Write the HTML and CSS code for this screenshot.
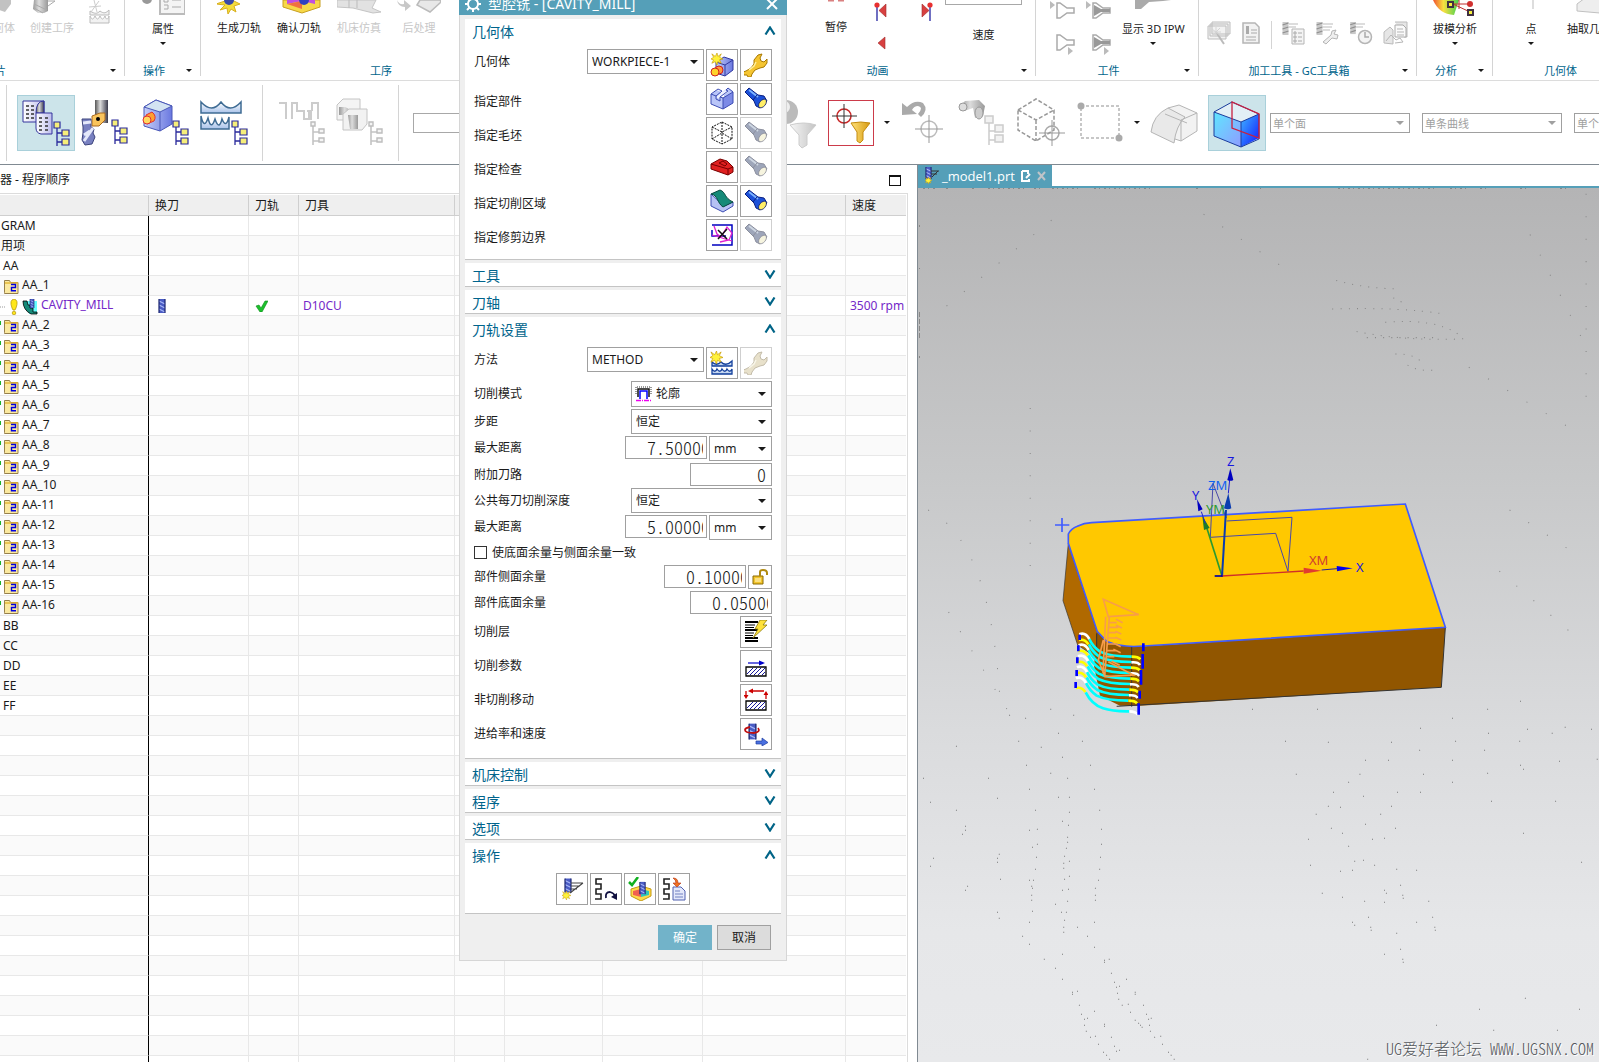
FILE: index.html
```html
<!DOCTYPE html>
<html lang="zh-CN">
<head>
<meta charset="utf-8">
<title>型腔铣 - [CAVITY_MILL]</title>
<link rel="stylesheet" href="styles.css">
</head>
<body>
<svg class="defs" width="0" height="0" aria-hidden="true">
  <defs>
    <linearGradient id="gBlue" x2="1"><stop offset="0" stop-color="#c3cdf8"/><stop offset="1" stop-color="#6a78e0"/></linearGradient>
    <linearGradient id="gPage" x2="1"><stop offset="0" stop-color="#fff"/><stop offset="1" stop-color="#bcbcec"/></linearGradient>
    <linearGradient id="gSteel" x2="1"><stop offset="0" stop-color="#555"/><stop offset=".4" stop-color="#ddd"/><stop offset="1" stop-color="#3a3a4a"/></linearGradient>
    <linearGradient id="gGray" x2="1"><stop offset="0" stop-color="#f6f6f6"/><stop offset="1" stop-color="#c4c4c4"/></linearGradient>
    <linearGradient id="gDark" x2="1"><stop offset="0" stop-color="#999"/><stop offset=".4" stop-color="#ddd"/><stop offset="1" stop-color="#999"/></linearGradient>
    <linearGradient id="gGold" x2="1"><stop offset="0" stop-color="#ffe27a"/><stop offset="1" stop-color="#d79a10"/></linearGradient>
    <linearGradient id="gWater" y2="1" x2="0"><stop offset="0" stop-color="#fff"/><stop offset="1" stop-color="#a9c3ea"/></linearGradient>
    <linearGradient id="gCubeL" y2="1" x2="1"><stop offset="0" stop-color="#5fe6ff"/><stop offset="1" stop-color="#8f9cff"/></linearGradient>
    <linearGradient id="gCubeR" y2="1" x2="1"><stop offset="0" stop-color="#3fb4ff"/><stop offset="1" stop-color="#1018ff"/></linearGradient>
    <linearGradient id="gRain" x2="1"><stop offset="0" stop-color="#f05030"/><stop offset=".4" stop-color="#f8e040"/><stop offset="1" stop-color="#40d050"/></linearGradient>
  </defs>
  <symbol id="tree" viewBox="0 0 18 26"><path d="M4 6v19M4 12h6M4 21h6" fill="none" stroke="#2a2a9c" stroke-width="1.3"/><path d="M1 1h6v6H1zM9 9h7v6H9zM9 18h7v6H9z" fill="#f6ee7a" stroke="#2a2a9c" stroke-width="1.2"/></symbol>
  <symbol id="treeGray" viewBox="0 0 18 26"><path d="M4 6v19M4 12h6M4 21h6" fill="none" stroke="#c4c4c4" stroke-width="1.6"/><path d="M2 2h4v4H2zM10 9h5v4h-5zM10 18h5v4h-5z" fill="#f4f4f4" stroke="#bdbdbd" stroke-width="1.4"/></symbol>
  <symbol id="torch" viewBox="0 0 24 24"><path d="M1 5l4-4 9 7 6 1 3 5-7 7-4-2-2-5z" fill="#1c50d8" stroke="#0a1f80"/><path d="M5 3l9 7" stroke="#7db4ff" stroke-width="1.800"/><path d="M13 8l-4 5" stroke="#0a1f80"/><ellipse cx="18.500" cy="16.500" rx="3" ry="5" transform="rotate(40 18.500 16.500)" fill="#ffee66" stroke="#12206c" stroke-width=".8"/></symbol>
  <symbol id="wrench" viewBox="0 0 24 24"><path d="M14 2l4-1-2 4 1 3 3 1 3-3 0 4-3 4-4 1-5 2-3 4-1 3-3 0-1-2-3 0-1-3 3-1 5-3 3-4 0-4z" fill="#f5c531" stroke="#a87800"/><path d="M12 9l-2 4-5 4" stroke="#fff0a0" stroke-width="1.500" fill="none"/></symbol>
  <symbol id="star" viewBox="0 0 14 14"><path d="M7 0l1 4 4-3-2 4 4 2-4 1 2 4-4-2-1 4-2-4-4 2 2-4-3-1 3-2-2-4 4 3z" fill="#fff23a" stroke="#c49500" stroke-width=".7"/></symbol>
  <symbol id="cutter" viewBox="0 0 8 14"><path d="M1 0h6v14H1z" fill="#4a5cc4"/><path d="M1 2l6 3M1 6l6 3M1 10l6 3" stroke="#a9b8f8" stroke-width="1.200"/><path d="M1 0v14M7 0v14" stroke="#1c2570" stroke-width="1.200"/></symbol>
  <symbol id="cutterGray" viewBox="0 0 8 14"><path d="M1 0h6v13H1z" fill="#c9c9c9"/><path d="M1 3l6-2M1 7l6-2M1 11l6-2" stroke="#8f8f8f" stroke-width="1.200"/></symbol>
  <symbol id="folder" viewBox="0 0 20 16"><path d="M4.500 13.500V1.500h5l1 2h7.500v11H4.500z" fill="#fbe9a0" stroke="#97804a"/><path d="M5 4h13" stroke="#e5b93a" stroke-width="1.500"/><path d="M11 5.500h4.500v3h-4v3.300h4.500" fill="none" stroke="#0000e0" stroke-width="1.400"/></symbol>
  <symbol id="part" viewBox="0 0 24 24"><path d="M1 7l6-4 4 2v5l3 1 0-5-2-1 6-4 5 3v12l-10 6-12-5z" fill="#b9c5f8"/><path d="M13 11l10-6v11l-10 6z" fill="#7c8ae6"/><path d="M7 9l8-6 3 2-7 5v2l-4-1z" fill="#eef1ff"/><path d="M1 7l7-5 4 2-6 5v3l4 2V10l8-6-2-1 2-2 5 4v11l-10 6-12-5zM1 7l5 2M13 11v11M10 10l3 1 10-6" fill="none" stroke="#3d4db4"/></symbol>
  <symbol id="blank" viewBox="0 0 24 24"><path d="M12 1l10 5v12l-10 5-10-5V6zM2 6l10 5 10-5M12 1v22M2 18l10-6 10 6" fill="none" stroke="#111" stroke-dasharray="2 1"/></symbol>
  <symbol id="check" viewBox="0 0 24 24"><path d="M1 9l9-5 7 2 6 6v5l-5 3L1 14z" fill="#e02020" stroke="#700"/><path d="M1 9l17 5 5-2M18 14v6M9 8l4-2 4 3-2 2z" fill="none" stroke="#700"/></symbol>
  <symbol id="area" viewBox="0 0 24 24"><path d="M1 5v12l12 6 10-6v-4l-9 4z" fill="#b6c2f4" stroke="#3d4db4"/><path d="M1 5l9-4c6 2 4 8 13 12l-10 5C7 14 8 6 1 5z" fill="#158a78" stroke="#074a40"/></symbol>
  <symbol id="trim" viewBox="0 0 24 24"><path d="M2 2h20v20H2M2 7v6h14" fill="none" stroke="#0000c0" stroke-width="1.500"/><path d="M4 3l3 8 4 3 6-10 5 6-3 7-9 2M2 12l20 6" fill="none" stroke="#e020d0" stroke-width="1.300"/><path d="M8 7l9 9M17 6L8 16" stroke="#111" stroke-width="1.500"/></symbol>
  <symbol id="newgeo" viewBox="0 0 24 24"><path d="M6 9l8-5 9 3v10l-8 6-9-3z" fill="url(#gBlue)" stroke="#3038a0"/><path d="M6 9l9 3 8-5M15 12v11" fill="none" stroke="#3038a0"/><circle cx="9" cy="17" r="4" fill="#ff9a3a" stroke="#d02020"/><circle cx="5" cy="19" r="4" fill="#ffd22a" stroke="#d02020"/><use href="#star" x="1" y="0" width="12" height="12"/></symbol>
  <symbol id="newmethod" viewBox="0 0 24 24"><path d="M2 11c3 3 6 3 9 0 3 3 7 3 11-1v5H2z" fill="url(#gWater)" stroke="#123f9c" stroke-width="1.300"/><path d="M2 18c2 3 4 3 5 0 2 3 4 3 5 0 2 3 4 3 5 0 2 3 4 3 5 0v5H2z" fill="url(#gWater)" stroke="#123f9c" stroke-width="1.300"/><use href="#star" x="0" y="0" width="13" height="13"/></symbol>
  <symbol id="hatch" viewBox="0 0 24 24"><path d="M2 13h20v9H2z" fill="#fff" stroke="#000" stroke-width="1.300"/><path d="M3 20l6-6M6 21l7-7M10 21l7-7M14 21l7-7M18 21l3-3" stroke="#1a1a9c"/></symbol>
  <symbol id="coil" viewBox="0 0 24 24"><path d="M9 2H3v5h5v5H3v5h5v5H2" fill="none" stroke="#222" stroke-width="1.600"/></symbol>
  <symbol id="gen" viewBox="0 0 24 24"><use href="#cutter" x="4" y="1" width="8" height="15"/><path d="M11 6h12M11 9h9M11 12h6M23 6L10 16" stroke="#444" stroke-width="1.100"/><use href="#star" x="1" y="14" width="11" height="9"/></symbol>
  <symbol id="chev" viewBox="0 0 12 9"><path d="M1.500 .5L6 7.500 10.500 .5" fill="none" stroke="#006487" stroke-width="2.200"/></symbol>
</svg>

<div class="app">
<header class="ribbon">
  <section class="group g-create">
    <div class="items">
      <button class="tool off" type="button"><svg width="22" height="20"><path d="M0 8l12 4V0M12 12L18 4V0H0" fill="#c2c2c2"/></svg>何体</button>
      <button class="tool off" type="button"><svg width="44" height="20"><path d="M4 0h14v11l-4 2H8l-5-4z" fill="url(#gDark)"/><path d="M4 4l13 6M4 8l9 5" stroke="#aaa"/><path d="M18 1h7l-7 5" fill="none" stroke="#aaa"/></svg>创建工序</button>
      <button class="tool off" type="button" aria-label="创建方法"><svg width="22" height="24"><path d="M1 11c5 3 7 3 10 0 4 3 6 2 9-1v5H1zM1 16c2 4 3 4 5 0 2 4 3 4 5 0 2 4 3 4 5 0 1 4 3 4 4 0v7H1z" fill="#f2f2f2" stroke="#bbb"/><path d="M0 7l12-1M5 0l3 12M10 1L2 12" stroke="#ccc"/></svg></button>
    </div>
    <div class="caption first"><span>片</span><i class="tri"></i></div>
  </section>
  <section class="group g-prop">
    <div class="items mid"><button class="tool drop" type="button"><svg width="44" height="21"><circle cx="6" cy="-1" r="5" fill="#999"/><path d="M19-2h25v16H19z" fill="#f4f4f4" stroke="#bbb" stroke-width="2"/><path d="M23-2h4v4h-4zM23 5h4v4h-4M31 0h9M31 7h9" fill="none" stroke="#aaa"/></svg>属性<i class="tri"></i></button></div>
    <div class="caption"><span>操作</span><i class="tri"></i></div>
  </section>
  <section class="group g-op">
    <div class="items">
      <button class="tool" type="button"><svg width="44" height="20"><path d="M12 0L0 4l9 1-5 5 7-2 1 6 3-5 5 3-2-6 6-2-8-4" fill="#f4dc3a" stroke="#d8b020" transform="translate(-1)"/><circle cx="12" cy="0" r="5" fill="#3a4aa8"/></svg>生成刀轨</button>
      <button class="tool" type="button"><svg width="44" height="20"><path d="M6 0v7l19 6 18-6V0z" fill="#f7d848" stroke="#c8a020"/><path d="M10 0v4l15-3 13 3V0z" fill="#c050e0"/><path d="M10 4l15-3v8z" fill="#f07040"/><circle cx="27" cy="0" r="5" fill="#3040c0"/></svg>确认刀轨</button>
      <button class="tool off" type="button"><svg width="44" height="20"><path d="M0 0v7l16 1 20 5 8-1-9-4 4-8z" fill="#e2e2e2" stroke="#c4c4c4"/><path d="M12 0v8M20 0v8" stroke="#bbb"/></svg>机床仿真</button>
      <button class="tool off" type="button"><svg width="44" height="20"><path d="M0 0q2 5 7 4V0l7 6-6 5V7Q1 7 0 0z" fill="#c8c8c8"/><path d="M20 5l3-5h20l1 2-11 10z" fill="#e8e8e8" stroke="#bbb" stroke-width="1.500"/></svg>后处理</button>
    </div>
    <div class="caption"><span>工序</span></div>
  </section>
  <section class="group g-hidden"></section>
  <section class="group g-anim">
    <div class="items">
      <button class="tool" type="button"><svg width="22" height="19"><path d="M3 0h6M13 0h6" stroke="#d98080" stroke-width="3"/></svg>暂停</button>
      <svg class="glyphs" width="64" height="54"><path d="M6 5v16M59 5v16" stroke="#3434a8" stroke-width="1.400"/><circle cx="6" cy="5" r="2.600" fill="#e83030"/><circle cx="59" cy="5" r="2.600" fill="#e83030"/><path d="M15 4v13L8 10.500zM51 4v13l7-6.500zM14 37v12l-7-6z" fill="#d84040" stroke="#a02c2c" stroke-width=".6"/></svg>
      <label class="speed"><input type="text" aria-label="速度值">速度</label>
    </div>
    <div class="caption"><span>动画</span><i class="tri"></i></div>
  </section>
  <section class="group g-work">
    <div class="items">
      <svg class="glyphs" width="62" height="56"><g fill="#fff" stroke="#aaa" stroke-width="1.500"><path id="fn" d="M7 3h3l7 5h7v5h-7l-7 5H7z"/><use href="#fn" y="32"/><use href="#fn" x="36"/><use href="#fn" x="36" y="32"/></g><path d="M44 5l7 4h9v3h-9l-7 4zM44 37l7 4h9v3h-9l-7 4z" fill="#999"/><path d="M0 1l5 4-5 4zM36 1l5 4-5 4zM18 47l5 4-5 4zM54 47l5 4-5 4z" fill="#bbb"/></svg>
      <button class="tool drop" type="button"><svg width="44" height="21"><path d="M4 0h36l-8 1-14 1-8 7H4z" fill="#aaa"/></svg>显示 3D IPW<i class="tri"></i></button>
    </div>
    <div class="caption"><span>工件</span><i class="tri"></i></div>
  </section>
  <section class="group g-gc">
    <div class="items tools">
      <button type="button" aria-label="向导"><svg width="24" height="24"><path d="M5 1h18v12H5zM3 3h18v12H3zM1 5h18v13H1z" fill="#f2f2f2" stroke="#bdbdbd"/><path d="M9 11l8 12" stroke="#bbb" stroke-width="2"/><path d="M5 8l9 7M13 7l-8 8M9 6v10M4 11h10" stroke="#d4d4d4"/></svg></button>
      <button type="button" aria-label="报告"><svg width="20" height="24"><path d="M2 2h12l4 4v16H2z" fill="#f2f2f2" stroke="#b5b5b5" stroke-width="1.500"/><path d="M10 9h6M10 12h6M5 16h10M5 19h10" stroke="#aaa"/><path d="M5 5h3v8H5z" fill="#aaa"/></svg></button>
      <i class="bar"></i>
      <button type="button" aria-label="刀具表"><svg width="24" height="24"><use href="#cutterGray" x="0" y="1" width="9" height="14"/><path d="M8 3h9M8 6h7" stroke="#bbb"/><path d="M11 8h12v15H11z" fill="#f4f4f4" stroke="#b5b5b5"/><path d="M13 11h2v2h-2zM13 15h2v2h-2zM13 19h2v2h-2zM17 12h4M17 16h4M17 20h4" fill="none" stroke="#aaa"/></svg></button>
      <button type="button" aria-label="刀具设置"><svg width="24" height="24"><use href="#cutterGray" x="0" y="1" width="9" height="14"/><path d="M8 3h10M8 6h9M8 9h7" stroke="#bbb"/><path d="M8 21l8-7 1-4 4-1-2 4 4 1-1 4-5-1-6 6z" fill="#eee" stroke="#b5b5b5"/></svg></button>
      <button type="button" aria-label="时间"><svg width="24" height="24"><use href="#cutterGray" x="0" y="1" width="8" height="13"/><path d="M7 3h9M7 6h7" stroke="#bbb"/><circle cx="16" cy="16" r="6.500" fill="#f4f4f4" stroke="#b5b5b5" stroke-width="1.500"/><path d="M16 11v5h4" fill="none" stroke="#aaa" stroke-width="1.500"/></svg></button>
      <button type="button" aria-label="输出"><svg width="26" height="24"><path d="M1 11l6-5 3 3v14l-9-1zM12 1h12v15h-3" fill="#e6e6e6" stroke="#bbb"/><path d="M12 4h8l3 3v9H12z" fill="#fafafa" stroke="#aaa"/><path d="M14 8h6M14 11h7M14 14h7M3 20l5-6 5 5 4-2 3 4-8 1" stroke="#b5b5b5" fill="none"/></svg></button>
    </div>
    <div class="caption"><span>加工工具 - GC工具箱</span><i class="tri"></i></div>
  </section>
  <section class="group g-ana">
    <div class="items mid"><button class="tool drop" type="button"><svg width="44" height="21"><path d="M0 0q6 14 21 15l5-15z" fill="url(#gRain)"/><path d="M20 4l17 8M20 4h17M26 0v9" stroke="#c03030" fill="none"/><path d="M15 2h5v5h-5zM35 10h5v5h-5z" fill="#f4f040" stroke="#403040" stroke-width="2"/><circle cx="37" cy="4" r="3" fill="#d03030"/></svg>拔模分析<i class="tri"></i></button></div>
    <div class="caption"><span>分析</span><i class="tri"></i></div>
  </section>
  <section class="group g-geo">
    <div class="items">
      <button class="tool drop" type="button"><svg width="44" height="21"><path d="M24 0v9" stroke="#bbb"/></svg>点<i class="tri"></i></button>
      <button class="tool drop" type="button"><svg width="44" height="21"><path d="M10 4l8-6h26v16l-34-3z" fill="#eee" stroke="#c0c0c0"/></svg>抽取几何</button>
    </div>
    <div class="caption"><span>几何体</span></div>
  </section>
</header>

<nav class="toolbar">
  <div class="set views">
    <button class="view on" type="button" aria-label="程序顺序视图"><svg width="58" height="56"><path d="M6 6h21v21H6z" fill="url(#gPage)" stroke="#34349c"/><path d="M19 18q0-12 8-12v12z" fill="url(#gSteel)" stroke="#34349c"/><path d="M19 18h16v21H24q-5-1-5-6z" fill="url(#gPage)" stroke="#34349c"/><path d="M9 11h3M14 11h3M9 15h3M14 15h3M9 19h3M14 19h3M9 23h3M14 23h3M22 23h3M28 23h3M22 27h3M28 27h3M22 31h3M28 31h3M22 35h3M28 35h3" stroke="#333" stroke-width="1.500"/><use href="#tree" x="36" y="26" width="18" height="26"/></svg></button>
    <button class="view" type="button" aria-label="机床视图"><svg width="58" height="56"><path d="M18 5h13v23H18z" fill="url(#gSteel)"/><path d="M15 21l8-3h5v7l-6 6h-7z" fill="#f9c45c" stroke="#a86820"/><circle cx="21" cy="24" r="2"/><path d="M5 24h9v8l3 2-1 4 2 4-3 7-7 1-3-5 1-7 0-6z" fill="#7880c0" stroke="#3c447c"/><path d="M7 46l9-13M6 28l8-1M7 40l6-4" stroke="#e4e8fa" stroke-width="3"/><use href="#tree" x="34" y="24" width="18" height="26"/></svg></button>
    <button class="view" type="button" aria-label="几何视图"><svg width="58" height="56"><path d="M7 12l12-7 16 6v18l-12 7-16-5z" fill="url(#gBlue)" stroke="#4a58b8"/><path d="M7 12l16 5 12-6-16-6z" fill="#d3e3f2" stroke="#4a58b8"/><path d="M23 17v19" stroke="#4a58b8"/><path d="M9 20l6-3q5 4 2 9l-7 3z" fill="#ffa030" stroke="#e03030"/><circle cx="10" cy="25" r="4" fill="#ffd860" stroke="#e03030"/><use href="#tree" x="35" y="25" width="18" height="26"/></svg></button>
    <button class="view" type="button" aria-label="加工方法视图"><svg width="58" height="56"><path d="M4 7q11 12 20 0 9 12 20 0v11H4z" fill="url(#gWater)" stroke="#3f6c94" stroke-width="1.500"/><path d="M4 21q3 14 7 2 3 13 7 1 4 12 7 0 4 10 7-2v12H4z" fill="url(#gWater)" stroke="#3f6c94" stroke-width="1.500"/><use href="#tree" x="34" y="25" width="18" height="26"/></svg></button>
  </div>
  <div class="set sims">
    <button class="view" type="button" aria-label="刀轨"><svg width="58" height="56"><path d="M6 8h7v16M19 24V8h5v8h7v8h5V16M36 24h2v-8h-4M39 16V8h6v16" fill="none" stroke="#ccc" stroke-width="2"/><use href="#treeGray" x="36" y="25" width="18" height="26"/></svg></button>
    <button class="view" type="button" aria-label="工件"><svg width="58" height="56"><path d="M6 10l6-6h17v14l-6 7H6z" fill="#f4f4f4" stroke="#c4c4c4"/><path d="M8 12h6q6 2 8 8H8z" fill="url(#gDark)"/><path d="M12 19l6-5h18v15l-5 6H12z" fill="#f2f2f2" stroke="#c4c4c4"/><path d="M17 20h10v14h-8z" fill="url(#gDark)"/><use href="#treeGray" x="36" y="25" width="18" height="26"/></svg></button>
  </div>
  <input class="finder" type="text" aria-label="查找">
  <div class="set picks">
    <button class="pick" type="button" aria-label="过滤器"><svg width="32" height="56"><circle cx="0" cy="17" r="12" fill="#bbb"/><circle cx="-2" cy="12" r="6" fill="#eee"/><path d="M4 30q14-4 26 0l-9 10v10l-5 3-3-3V40z" fill="url(#gGray)" stroke="#ccc"/></svg></button>
    <button class="pick boxed" type="button" aria-label="选择过滤器"><svg width="44" height="44"><circle cx="15" cy="15" r="7" fill="none" stroke="#c82828" stroke-width="1.500"/><path d="M15 3v24M3 15h25" stroke="#333"/><path d="M22 22q10-2 19 0l-7 9v8l-3 3-3-2v-9z" fill="url(#gGold)" stroke="#c48c10"/></svg></button>
    <i class="tri"></i>
    <button class="pick wide" type="button" aria-label="撤销"><svg width="48" height="56"><path d="M2 20V8l5 4q8-8 16-4 6 7-2 14l-3-3q6-7 0-8-4 0-6 4l5 4z" fill="#aaa"/><circle cx="29" cy="34" r="8" fill="none" stroke="#bbb" stroke-width="1.500"/><path d="M29 20v28M15 34h28" stroke="#999"/></svg></button>
    <button class="pick wide" type="button" aria-label="查找"><svg width="48" height="56"><path d="M2 11l5-5 14-1 6 6-2 10-8 2-2-10-9 3z" fill="url(#gDark)"/><ellipse cx="5" cy="12" rx="4" ry="4" fill="#ddd" stroke="#999"/><ellipse cx="21" cy="18" rx="4" ry="6" fill="#ccc" stroke="#999"/><path d="M31 28v22M31 36h6M31 45h6" stroke="#ccc" stroke-width="1.500"/><path d="M27 21h8v7h-8zM37 30h8v7h-8zM37 40h8v7h-8z" fill="#f2f2f2" stroke="#ccc" stroke-width="1.500"/></svg></button>
    <button class="pick wide" type="button" aria-label="体"><svg width="50" height="56"><path d="M2 15L20 4l18 11v20L20 46 2 35zM2 15l18 10 18-10M20 25v21" fill="none" stroke="#999" stroke-width="1.500" stroke-dasharray="4 2"/><circle cx="36" cy="38" r="7" fill="none" stroke="#aaa" stroke-width="1.500"/><path d="M36 25v26M23 38h26" stroke="#999"/></svg></button>
    <button class="pick wide" type="button" aria-label="矩形选择"><svg width="48" height="56"><path d="M5 11h38v32H5z" fill="none" stroke="#b5b5b5" stroke-width="1.500" stroke-dasharray="3 2"/><circle cx="5" cy="11" r="3.500" fill="#aaa"/><circle cx="43" cy="43" r="3.500" fill="#aaa"/></svg></button>
    <i class="tri"></i>
    <button class="pick wide" type="button" aria-label="面"><svg width="48" height="56"><path d="M18 13l11-3 18 8v18l-16 10-12-4z" fill="#f2f2f2" stroke="#b5b5b5"/><path d="M1 37q2-17 17-24l17 9q-9 9-11 26z" fill="#e9e9e9" stroke="#b5b5b5"/><path d="M15 19l22 9M31 25l16-7M31 25v21" stroke="#b5b5b5"/></svg></button>
    <button class="view on" type="button" aria-label="着色显示"><svg width="58" height="56"><path d="M6 17L23 8l29 11v25L34 52 6 41z" fill="#e2eff6"/><path d="M6 17l27 10v25L6 41z" fill="url(#gCubeL)"/><path d="M33 27l18-8v24l-18 9z" fill="url(#gCubeR)"/><path d="M6 17L24 7l27 12v25l-18 8L6 41zM6 17l27 10 18-8M33 27v25" fill="none" stroke="#1c3c9c"/><path d="M24 7v26l27 10V19z" fill="none" stroke="#c82040" stroke-width="1.300"/></svg></button>
  </div>
  <div class="rules">
    <span class="combo dim"><select disabled aria-label="面规则"><option>单个面</option></select></span>
    <span class="combo dim"><select disabled aria-label="曲线规则"><option>单条曲线</option></select></span>
    <span class="combo dim"><select disabled aria-label="体规则"><option>单个体</option></select></span>
  </div>
</nav>

<main class="work">
  <section class="navigator">
    <div class="navtitle"><h2>器 - 程序顺序</h2><button type="button" class="maxi" aria-label="最大化"></button></div>
    <div class="sheet">
    <table>
      <colgroup><col class="c1"><col class="c2"><col class="c3"><col class="c4"><col class="c5"><col class="c6"><col class="c7"><col class="c8"><col class="c9"></colgroup>
      <thead><tr><th></th><th>换刀</th><th>刀轨</th><th>刀具</th><th></th><th></th><th></th><th></th><th>速度</th></tr></thead>
      <tbody>
      <tr><td class="r0">GRAM<td><td><td><td><td><td><td><td></tr>
      <tr><td class="r0">用项<td><td><td><td><td><td><td><td></tr>
      <tr><td class="r1">AA<td><td><td><td><td><td><td><td></tr>
      <tr><td><svg class="fold" width="20" height="16"><use href="#folder"/></svg>AA_1<td><td><td><td><td><td><td><td></tr>
      <tr class="active"><td><svg class="fold" width="39" height="16"><path d="M0 8h6" stroke="#999" stroke-dasharray="1 1"/><path d="M14 0q5 1 2 9l-1 2h-2l-1-2q-3-8 2-9z" fill="#ffe71a" stroke="#b09000" stroke-width=".7"/><circle cx="14" cy="14" r="1.800" fill="#ffe71a" stroke="#b09000" stroke-width=".7"/><path d="M27 2h10v13h-8z" fill="#6ff"/><path d="M23 2h4l1 4h2v3h3v4h4v2h-6q-8-4-8-13z" fill="#158a78" stroke="#000" stroke-width=".8"/><use href="#cutter" x="28" y="0" width="8" height="9"/></svg>CAVITY_MILL<td class="mark"><svg width="8" height="14"><use href="#cutter"/></svg><td class="mark tick"><svg width="13" height="12"><path d="M1 6l3-1 2 3 4-7 3 0-6 11H5z" fill="#1cc02c" stroke="#0c8c1c" stroke-width=".6"/></svg><td>D10CU<td><td><td><td><td>3500 rpm</tr>
      <tr><td class="ok"><svg class="fold" width="20" height="16"><use href="#folder"/></svg>AA_2<td><td><td><td><td><td><td><td></tr>
      <tr><td class="ok"><svg class="fold" width="20" height="16"><use href="#folder"/></svg>AA_3<td><td><td><td><td><td><td><td></tr>
      <tr><td class="ok"><svg class="fold" width="20" height="16"><use href="#folder"/></svg>AA_4<td><td><td><td><td><td><td><td></tr>
      <tr><td class="ok"><svg class="fold" width="20" height="16"><use href="#folder"/></svg>AA_5<td><td><td><td><td><td><td><td></tr>
      <tr><td class="ok"><svg class="fold" width="20" height="16"><use href="#folder"/></svg>AA_6<td><td><td><td><td><td><td><td></tr>
      <tr><td class="ok"><svg class="fold" width="20" height="16"><use href="#folder"/></svg>AA_7<td><td><td><td><td><td><td><td></tr>
      <tr><td class="ok"><svg class="fold" width="20" height="16"><use href="#folder"/></svg>AA_8<td><td><td><td><td><td><td><td></tr>
      <tr><td class="ok"><svg class="fold" width="20" height="16"><use href="#folder"/></svg>AA_9<td><td><td><td><td><td><td><td></tr>
      <tr><td class="ok"><svg class="fold" width="20" height="16"><use href="#folder"/></svg>AA_10<td><td><td><td><td><td><td><td></tr>
      <tr><td class="ok"><svg class="fold" width="20" height="16"><use href="#folder"/></svg>AA-11<td><td><td><td><td><td><td><td></tr>
      <tr><td class="ok"><svg class="fold" width="20" height="16"><use href="#folder"/></svg>AA-12<td><td><td><td><td><td><td><td></tr>
      <tr><td class="ok"><svg class="fold" width="20" height="16"><use href="#folder"/></svg>AA-13<td><td><td><td><td><td><td><td></tr>
      <tr><td class="ok"><svg class="fold" width="20" height="16"><use href="#folder"/></svg>AA-14<td><td><td><td><td><td><td><td></tr>
      <tr><td class="ok"><svg class="fold" width="20" height="16"><use href="#folder"/></svg>AA-15<td><td><td><td><td><td><td><td></tr>
      <tr><td class="ok"><svg class="fold" width="20" height="16"><use href="#folder"/></svg>AA-16<td><td><td><td><td><td><td><td></tr>
      <tr><td class="r1">BB<td><td><td><td><td><td><td><td></tr>
      <tr><td class="r1">CC<td><td><td><td><td><td><td><td></tr>
      <tr><td class="r1">DD<td><td><td><td><td><td><td><td></tr>
      <tr><td class="r1">EE<td><td><td><td><td><td><td><td></tr>
      <tr><td class="r1">FF<td><td><td><td><td><td><td><td></tr>
      <tr><td><td><td><td><td><td><td><td><td></tr>
      <tr><td><td><td><td><td><td><td><td><td></tr>
      <tr><td><td><td><td><td><td><td><td><td></tr>
      <tr><td><td><td><td><td><td><td><td><td></tr>
      <tr><td><td><td><td><td><td><td><td><td></tr>
      <tr><td><td><td><td><td><td><td><td><td></tr>
      <tr><td><td><td><td><td><td><td><td><td></tr>
      <tr><td><td><td><td><td><td><td><td><td></tr>
      <tr><td><td><td><td><td><td><td><td><td></tr>
      <tr><td><td><td><td><td><td><td><td><td></tr>
      <tr><td><td><td><td><td><td><td><td><td></tr>
      <tr><td><td><td><td><td><td><td><td><td></tr>
      <tr><td><td><td><td><td><td><td><td><td></tr>
      <tr><td><td><td><td><td><td><td><td><td></tr>
      <tr><td><td><td><td><td><td><td><td><td></tr>
      <tr><td><td><td><td><td><td><td><td><td></tr>
      <tr><td><td><td><td><td><td><td><td><td></tr>
      <tr><td><td><td><td><td><td><td><td><td></tr>
      </tbody>
    </table>
    </div>
  </section>

  <section class="viewport">
    <div class="tabs"><div class="tab"><svg width="18" height="18"><use href="#cutter" x="3" y="0" width="7" height="12"/><path d="M9 4h8M9 7h6M16 4l-6 6" stroke="#333"/><use href="#star" x="2" y="10" width="9" height="7"/></svg><span>_model1.prt</span><svg width="10" height="12"><path d="M1 1h6v3M1 1v10h7V9M9 4L5 8" fill="none" stroke="#fff" stroke-width="2"/></svg><button type="button" class="tabx" aria-label="关闭"><svg width="9" height="10"><path d="M1 1l7 8M8 1L1 9" stroke="#c0c4c8" stroke-width="2"/></svg></button></div></div>
    <div class="scene">
    <svg class="model" width="100%" height="100%">
      <g transform="translate(-918 -188)">
        <path d="M923 188.500h12M946 188.500h3M972 188.500h2M988 188.500h36M1034 188.500h9M1052 188.500h30M1094 188.500h60M1196 188.500h2M1260 188.500h1M1338 188.500h100M1450 188.500h16M1480 188.500h8M1520 188.500h6M1560 188.500h6" stroke="#888" stroke-dasharray="2 3 1 4"/>
        <path d="M919.500 312v28M919.500 225v2M919.500 268v1M919.500 356v2" stroke="#888" stroke-dasharray="5 2"/>
        <g transform="scale(1.02)" stroke="#888" stroke-dasharray="1 7" fill="none"><path d="M1310 275q30 8 58 8M1366 292l10 5M1306 303q70-2 110 5M1358 316q50-4 72 12M1330 325q50 10 108 7M1340 331h70M1368 347q20 0 25 8M1380 358q10 6 25 5"/></g>
        <g transform="scale(1.02)" stroke="#888" stroke-dasharray="1 21" fill="none"><path d="M910 500q60 30 70 180M928 300l110-90M1010 400v160M1180 210l90 60M930 600l60 100M1440 360l100 60M1470 560l70 60M1500 230l50 100M1480 500l60 40M1555 190v200"/></g>
        <g transform="translate(920 700) scale(.433 .3333)">
          <path stroke="#666" stroke-width="3" d="M83 139h2M227 124h2M279 142h2M374 124h2M319 100h2M206 46h2M243 55h2M301 28h2M354 46h2M328 172h2M245 196h2M393 196h2M301 220h2M340 235h2M157 235h2M7 235h2M178 295h2M252 268h2M402 268h2M319 292h2M344 292h2M266 331h2M344 337h2M414 331h2M23 307h2M83 331h2M328 364h2M342 376h2M252 391h2M270 388h2M418 388h2M104 379h2M104 391h2M97 403h2M340 412h2M340 427h2M337 445h2M270 433h2M259 442h2M418 433h2M268 472h2M333 469h2M344 484h2M331 490h2M331 505h2M416 472h2M266 508h2M414 508h2M344 529h2M333 538h2M252 541h2M261 541h2M411 541h2M257 559h2M259 565h2M328 571h2M342 568h2M404 565h2M404 586h2M404 601h2M257 586h2M257 601h2M312 613h2M340 604h2M259 634h2M326 637h2M337 637h2M333 661h2M252 667h2M402 667h2M331 682h2M331 697h2M363 682h2M386 709h2M236 709h2M252 733h2M402 742h2M328 763h2M286 778h2M425 781h2M425 787h2M436 778h2M312 805h2M441 820h2M328 838h2M448 847h2M476 838h2M453 862h2M460 859h2M455 880h2M351 877h2M351 883h2M363 874h2M496 877h2M496 883h2M458 898h2M466 916h2M480 913h2M515 916h2M367 916h2M372 943h2M402 934h2M485 937h2M522 943h2M379 958h2M386 955h2M496 961h2M504 970h2M508 976h2M512 982h2M527 958h2M533 955h2M529 976h2M379 976h2M425 973h2M425 979h2M383 994h2M531 994h2M393 1012h2M404 1009h2M441 1012h2M541 1012h2M555 1009h2M411 1033h2M559 1033h2M448 1039h2M453 1054h2M460 1051h2M423 1057h2M430 1066h2M437 1078h2M573 1057h2M579 1066h2M586 1078h2M182 463h2M178 475h2M178 487h2M185 538h2M109 559h2M104 571h2M178 637h2M182 655h2M30 475h2M23 499h2M767 28h2M917 28h2M843 124h2M942 127h2M1088 127h2M1155 85h2M1229 55h2M1310 28h2M1386 4h2M1402 88h2M1459 100h2M1489 82h2M1550 88h2M1236 124h2M1384 124h2M1312 100h2M1153 151h2M1303 151h2M1028 181h2M1081 181h2M1229 181h2M1386 196h2M1393 208h2M1476 184h2M1563 178h2M868 223h2M1015 223h2M1162 223h2M1310 220h2M989 247h2M1229 247h2M954 277h2M1102 277h2M1155 277h2M1023 289h2M942 319h2M970 322h2M1088 319h2M1319 304h2M1467 304h2M914 343h2M1063 343h2M949 385h2M1028 373h2M1097 385h2M975 400h2M896 418h2M1044 418h2M1072 415h2M1393 400h2M989 439h2M1003 484h2M1023 481h2M901 496h2M1049 496h2M970 514h2M998 511h2M1100 508h2M1146 511h2M1527 487h2M1109 556h2M928 580h2M975 592h2M1072 571h2M1076 580h2M1114 586h2M1115 595h2M1026 604h2M1072 607h2M1174 604h2M1035 652h2M1183 652h2M998 667h2M1003 676h2M1146 667h2M1040 682h2M1041 691h2M1188 682h2M1189 691h2M1100 700h2M1109 748h2M1072 763h2M1114 778h2M1115 787h2M1397 895h2M1291 928h2M1522 928h2M1192 976h2M1324 991h2M1471 991h2M1033 1078h2M1217 1024h2"/>
        </g>
        <g transform="translate(1040 440) scale(.33333)">
          <path d="M85 310L69 482l44 133 60 40-1-80z" fill="#b06900" stroke="#333" stroke-width="2"/>
          <path d="M172 575l30 30 110 14 904-57-12 180-904 55h-60l-60-30-18-90z" fill="#915600"/>
          <path d="M1216 562l-12 180-974 57M170 580v45M275 620v180" fill="none" stroke="#333" stroke-width="3"/>
          <path d="M85 310v-28q8-16 27-23 20-10 43-11l941-56 120 370-906 56q-66 6-110-14l-28-29z" fill="#ffc800" stroke="#405cff" stroke-width="5"/>
          <g fill="none" stroke-width="8">
            <g id="pass"><path d="M148 597q10 22 32 38 30 15 95 15" stroke="#0ff"/><path d="M118 583q18-8 30 14" stroke="#fff"/><path d="M275 650q20 0 26 8" stroke="#ff0"/></g>
            <g id="pass2"><path d="M147 613q10 22 32 38 30 15 95 15" stroke="#0ff"/><path d="M117 600q18-4 28 13" stroke="#ff0"/><path d="M274 667q20-2 26 8" stroke="#fff"/></g>
            <use href="#pass" x="-2" y="33"/><use href="#pass2" x="-2" y="33"/>
            <use href="#pass" x="-4" y="66"/><use href="#pass2" x="-4" y="66"/>
            <use href="#pass" x="-7" y="99"/><use href="#pass2" x="-7" y="99"/>
            <use href="#pass" x="-10" y="132"/>
            <path d="M137 757q18 36 52 48 30 10 79 9" stroke="#0ff"/><path d="M108 744q18-4 28 12" stroke="#ff0"/><path d="M268 814q18 0 26 10" stroke="#fff"/>
          </g>
          <path d="M119 584v16M115 616v18M112 652v18M110 690v18M107 726v18M310 610v24M308 642v44M303 690v44M299 752v24M296 790v34" stroke="#00f" stroke-width="8"/>
          <path d="M190 478l106 46-91 6zM197 530l-8 170M208 530l-14 180M190 600l-15 60 20 50 85-5-75-40M205 548h25M205 562h30M203 578h25M203 594h28M200 612h25M200 632h30M198 650h25M228 538l20 10M228 556l18 8M226 574l18 8M226 592l18 8M222 610l20 10M220 628l22 10M215 664l24 12" fill="none" stroke="#f79d4a" stroke-width="5"/>
          <path d="M511 292l8-162 40 104M511 292l196-12 37 114 12-162-196 11" fill="none" stroke="#4848a8" stroke-width="3"/>
          <path d="M546 408L496 250" stroke="#2b9a30" stroke-width="5"/><path d="M487 228l22 36-17 6z" fill="#1e7a28"/>
          <path d="M496 250l-12-35" stroke="#2020d0" stroke-width="3"/><path d="M471 178l17 30-13 6z" fill="#0000c0"/>
          <path d="M546 410l12-200" stroke="#0a3cb0" stroke-width="6"/><path d="M565 160l9 45q-10 6-22 0z" fill="#0a3cb0"/>
          <path d="M565 160l4-40" stroke="#2020d0" stroke-width="3"/><path d="M571 85l9 35q-8 5-18 0z" fill="#0000c0"/>
          <path d="M546 408l245-15" stroke="#d03028" stroke-width="4"/><path d="M791 383l54 9-54 9z" fill="#e03c30"/>
          <path d="M845 390l46-4" stroke="#2020a0" stroke-width="3"/><path d="M890 378l48 7-47 9z" fill="#0000f0"/>
          <path d="M524 408h24" stroke="#0000a0" stroke-width="5"/>
          <path d="M45 255h43M66 234v42" stroke="#405cff" stroke-width="5"/>
        </g>
        <g class="axis"><text x="1227" y="466" fill="#1616e0">Z</text><text x="1208" y="490" fill="#1060f0">ZM</text><text x="1192" y="500" fill="#1616e0">Y</text><text x="1206" y="514" fill="#2b9a30">YM</text><text x="1309" y="565" fill="#d03c30">XM</text><text x="1356" y="572" fill="#1616e0">X</text></g>
      </g>
    </svg>
    <p class="watermark">UG爱好者论坛 WWW.UGSNX.COM</p>
    </div>
  </section>
</main>
</div>

<form class="dialog" role="dialog" aria-labelledby="dlgTitle">
  <div class="titlebar"><svg width="16" height="16"><circle cx="8" cy="8" r="5" fill="none" stroke="#fff" stroke-width="2"/><path d="M8 0v3M8 13v3M0 8h3M13 8h3M2 2l3 3M11 11l3 3M14 2l-3 3M5 11l-3 3" stroke="#fff" stroke-width="2"/></svg><h1 id="dlgTitle">型腔铣 - [CAVITY_MILL]</h1><button type="button" aria-label="关闭"><svg width="12" height="12"><path d="M1 1l10 10M11 1L1 11" stroke="#fff" stroke-width="2"/></svg></button></div>

  <section class="panel">
    <h3>几何体<svg class="up" width="12" height="9"><use href="#chev"/></svg></h3>
    <div class="rows">
      <div class="row top"><label for="geo">几何体</label><span class="combo w117"><select id="geo"><option>WORKPIECE-1</option></select></span><button type="button" aria-label="新建几何体"><svg><use href="#newgeo"/></svg></button><button type="button" aria-label="编辑几何体"><svg><use href="#wrench"/></svg></button></div>
      <div class="row pair"><span>指定部件</span><button type="button" aria-label="指定部件"><svg><use href="#part"/></svg></button><button type="button" aria-label="显示部件"><svg><use href="#torch"/></svg></button></div>
      <div class="row pair"><span>指定毛坯</span><button type="button" aria-label="指定毛坯"><svg><use href="#blank"/></svg></button><button type="button" disabled aria-label="显示毛坯"><svg><use href="#torch"/></svg></button></div>
      <div class="row pair"><span>指定检查</span><button type="button" aria-label="指定检查"><svg><use href="#check"/></svg></button><button type="button" disabled aria-label="显示检查"><svg><use href="#torch"/></svg></button></div>
      <div class="row pair"><span>指定切削区域</span><button type="button" aria-label="指定切削区域"><svg><use href="#area"/></svg></button><button type="button" aria-label="显示切削区域"><svg><use href="#torch"/></svg></button></div>
      <div class="row pair"><span>指定修剪边界</span><button type="button" aria-label="指定修剪边界"><svg><use href="#trim"/></svg></button><button type="button" disabled aria-label="显示修剪边界"><svg><use href="#torch"/></svg></button></div>
    </div>
  </section>
  <section class="panel"><h3>工具<svg width="12" height="9"><use href="#chev"/></svg></h3></section>
  <section class="panel"><h3>刀轴<svg width="12" height="9"><use href="#chev"/></svg></h3></section>
  <section class="panel">
    <h3>刀轨设置<svg class="up" width="12" height="9"><use href="#chev"/></svg></h3>
    <div class="rows">
      <div class="row top"><label for="method">方法</label><span class="combo w117"><select id="method"><option>METHOD</option></select></span><button type="button" aria-label="新建方法"><svg><use href="#newmethod"/></svg></button><button type="button" disabled aria-label="编辑方法"><svg><use href="#wrench"/></svg></button></div>
      <div class="row"><label for="mode">切削模式</label><span class="combo w141 pic"><svg width="18" height="16"><path d="M1 8V1h15v8" fill="none" stroke="#999" stroke-width="2" stroke-dasharray="1 1"/><path d="M3 11V3h11v8" fill="none" stroke="#111" stroke-width="1.500"/><path d="M5 13V5h7v8" fill="none" stroke="#00f" stroke-width="1.500"/><path d="M1 14.500h16" stroke="#e0e" stroke-width="1.300" stroke-dasharray="5 1 1 1"/></svg><select id="mode"><option>轮廓</option></select></span></div>
      <div class="row"><label for="step">步距</label><span class="combo w141"><select id="step"><option>恒定</option></select></span></div>
      <div class="row start"><label for="dist1">最大距离</label><input class="num" id="dist1" value="7.50000"><span class="combo w63"><select aria-label="单位"><option>mm</option></select></span></div>
      <div class="row"><label for="extra">附加刀路</label><input class="num end" id="extra" value="0"></div>
      <div class="row"><label for="depth">公共每刀切削深度</label><span class="combo w141"><select id="depth"><option>恒定</option></select></span></div>
      <div class="row start"><label for="dist2">最大距离</label><input class="num" id="dist2" value="5.00000"><span class="combo w63"><select aria-label="单位"><option>mm</option></select></span></div>
      <div class="row check"><input type="checkbox" id="same"><label for="same">使底面余量与侧面余量一致</label></div>
      <div class="row start"><label for="side">部件侧面余量</label><input class="num" id="side" value="0.10000"><button class="small" type="button" aria-label="解锁"><svg width="18" height="18"><path d="M2 8h10v8H2z" fill="#f2c52c" stroke="#8c6a00"/><path d="M4 10h6v4H4z" fill="#fbe080"/><path d="M9 8V4q0-2 3-2 4 0 4 3v2" fill="none" stroke="#b08a10" stroke-width="2"/></svg></button></div>
      <div class="row"><label for="floor">部件底面余量</label><input class="num" id="floor" value="0.05000"></div>
      <div class="row"><span>切削层</span><button type="button" aria-label="切削层"><svg viewBox="0 0 24 24"><path d="M1 2h13M1 10h13M1 18h13M1 21h13" stroke="#000" stroke-width="1.800"/><path d="M1 5h10M1 7.500h9M1 13h9M1 15.500h8" stroke="#000"/><path d="M16 0h7l-4 5h4L9 18l5-9h-3z" fill="#ffe23a" stroke="#8c7a10" stroke-width=".8"/></svg></button></div>
      <div class="row"><span>切削参数</span><button type="button" aria-label="切削参数"><svg viewBox="0 0 24 24"><use href="#hatch"/><path d="M4 9h12" stroke="#00c" stroke-width="1.200"/><path d="M15 6.500l6 2.500-6 2.500z" fill="#00c"/></svg></button></div>
      <div class="row"><span>非切削移动</span><button type="button" aria-label="非切削移动"><svg viewBox="0 0 24 24"><use href="#hatch"/><path d="M8 3h12M22 11V6M2 3v6" fill="none" stroke="#c00" stroke-width="1.300"/><path d="M4 3l5-2.500v5zM19.500 7L22 3l2.500 4zM-.5 7h5L2 11z" fill="#c00"/></svg></button></div>
      <div class="row"><span>进给率和速度</span><button type="button" aria-label="进给率和速度"><svg viewBox="0 0 24 24"><use href="#cutter" x="4" y="0" width="9" height="19"/><path d="M14 6q3 4-4 5-9 0-9-3 0-2 5-3" fill="none" stroke="#c01010" stroke-width="1.800"/><path d="M12 19h6v-3l6 4.500-6 3.500v-2h-6z" fill="#4a70e0" stroke="#1c3ca0" stroke-width=".7"/></svg></button></div>
    </div>
  </section>
  <section class="panel"><h3>机床控制<svg width="12" height="9"><use href="#chev"/></svg></h3></section>
  <section class="panel"><h3>程序<svg width="12" height="9"><use href="#chev"/></svg></h3></section>
  <section class="panel"><h3>选项<svg width="12" height="9"><use href="#chev"/></svg></h3></section>
  <section class="panel">
    <h3>操作<svg class="up" width="12" height="9"><use href="#chev"/></svg></h3>
    <div class="row actions">
      <button type="button" aria-label="生成"><svg><use href="#gen"/></svg></button>
      <button type="button" aria-label="重播"><svg viewBox="0 0 24 24"><use href="#coil" x="-1"/><path d="M12 21q-1-6 4-6 4 1 5 4" fill="none" stroke="#101040" stroke-width="1.800"/><path d="M17 20l6-4v7z" fill="#101040"/></svg></button>
      <button type="button" aria-label="确认"><svg viewBox="0 0 24 24"><path d="M3 12l10-3 10 3v7l-10 5-10-5z" fill="#ffd94a" stroke="#c49a10"/><path d="M5 14l8-2v8l-8-2z" fill="#f06050"/><path d="M13 12l8 2v4l-8 2z" fill="#30c8b8"/><use href="#cutter" x="11" y="4" width="7" height="14"/><path d="M1 5l3 3 6-8" fill="none" stroke="#10b020" stroke-width="2.500"/></svg></button>
      <button type="button" aria-label="列表"><svg viewBox="0 0 24 24"><use href="#coil" x="-1"/><path d="M11 10h8l4 4v9H11z" fill="#e4e8fb" stroke="#5060b0"/><path d="M13 14h5M13 17h8M13 20h8" stroke="#7080c0"/><path d="M11 1q5 0 5 5h3l-4 4-4-4h3q0-3-3-5z" fill="#f07020" stroke="#b03010" stroke-width=".6"/></svg></button>
    </div>
  </section>
  <div class="foot"><button class="okbtn" type="submit">确定</button><button class="cancel" type="button">取消</button></div>
</form>
</body>
</html>
```

FILE: styles.css
```css
* { box-sizing: border-box; }

body {
  margin: 0;
  height: 100vh;
  position: relative;
  overflow: hidden;
  background: #fff;
  color: #1a1a1a;
  font: 12px/20px "Noto Sans", "Noto Sans CJK SC", sans-serif;
}

h1, h2, h3, p { margin: 0; font-weight: 400; }
button, input, select { font: inherit; color: inherit; margin: 0; padding: 0; border-radius: 0; }
button { background: none; border: 0; }
svg { display: block; flex: none; }
.defs { position: absolute; }

.app { display: flex; flex-direction: column; height: 100%; }

.tri {
  flex: none;
  width: 6px;
  height: 0;
  border: 3px solid transparent;
  border-top-color: #1a1a1a;
  border-bottom: 0;
}

/* ribbon */
.ribbon {
  display: flex;
  flex: none;
  height: 81px;
  overflow: hidden;
  border-bottom: 1px solid #dcdcdc;
  font-size: 11px;
}
.group { display: flex; flex-direction: column; flex: none; position: relative; }
.group::after { content: ""; position: absolute; right: 0; top: 0; height: 76px; width: 1px; background: #d4d4d4; }
.g-create { width: 125px; }
.g-prop { width: 76px; }
.g-op { width: 376px; }
.g-hidden { width: 160px; }
.g-anim { width: 299px; }
.g-work { width: 163px; }
.g-gc { width: 218px; }
.g-ana { width: 76px; }
.g-geo { width: 152px; }
.g-op::after, .g-hidden::after { display: none; }
.items { display: flex; flex: 1; align-items: flex-start; }
.mid { justify-content: center; }
.caption { display: flex; align-items: center; height: 20px; padding: 1px 9px 0 0; color: #00648c; }
.caption span { flex: 1; text-align: center; padding-right: 3px; }
.g-op .caption { padding-right: 13px; }
.g-geo .caption { padding-right: 14px; }
.caption.first span { text-align: left; margin-left: -5px; }
.tool { display: flex; flex-direction: column; align-items: center; line-height: 16px; white-space: nowrap; flex: none; }
.tool .tri { margin-top: 5px; }
.off { color: #c8c8c8; }
.g-create .items { gap: 15px; margin-left: -7px; }
.g-op .items { gap: 16px; padding-left: 16px; }
.g-anim .items { padding-left: 88px; gap: 10px; }
.g-anim .glyphs { margin-left: 14px; }
.speed { display: flex; flex-direction: column; align-items: center; gap: 22px; line-height: 16px; }
.speed input { width: 77px; height: 5px; border: 1px solid #a8a8a8; border-top: 0; }
.g-work .items { padding-left: 14px; gap: 10px; }
.g-gc .tools { padding: 21px 8px 0; justify-content: space-between; }
.bar { width: 1px; height: 28px; background: #d4d4d4; }
.g-geo .items { padding-left: 16px; gap: 14px; }

/* border bar */
.toolbar {
  display: flex;
  flex: none;
  align-items: center;
  height: 84px;
  padding: 0 0 0 6px;
  overflow: hidden;
  border-bottom: 1px solid #808a92;
}
.set { display: flex; align-items: center; flex: none; height: 76px; }
.views { gap: 2px; border-left: 1px solid #d4d4d4; padding-left: 10px; width: 256px; }
.sims { border-left: 1px solid #d4d4d4; border-right: 1px solid #d4d4d4; width: 137px; padding-left: 10px; }
.view { width: 58px; height: 56px; display: flex; align-items: center; justify-content: center; flex: none; }
.view.on { background: #cce4ea; outline: 1px solid #a9d0da; outline-offset: -1px; }
.finder { width: 356px; height: 20px; margin: 0 17px 0 14px; border: 1px solid #a8a8a8; flex: none; }
.picks { gap: 10px; }
.pick { flex: none; }
.boxed { border: 1px solid #cc3b4a; }
.rules { display: flex; gap: 12px; margin-left: 4px; font-size: 11px; }
.rules .combo { width: 140px; height: 20px; flex: none; }

.combo { position: relative; display: flex; height: 25px; flex: none; }
.combo select {
  appearance: none;
  width: 100%;
  height: 100%;
  padding: 0 16px 0 4px;
  border: 1px solid #a0a0a0;
  background: #fff;
  opacity: 1;
}
.combo::after {
  content: "";
  position: absolute;
  right: 6px;
  top: 50%;
  margin-top: -2px;
  border: 4px solid transparent;
  border-top-color: #1a1a1a;
  border-bottom: 0;
}
.combo.dim select { color: #a0a0a0; padding-left: 2px; }
.combo.dim::after { border-top-color: #a0a0a0; }

/* navigator */
.work { display: flex; flex: 1; min-height: 0; }
.navigator { flex: 0 0 918px; display: flex; flex-direction: column; min-width: 0; border-right: 1px solid #808a92; overflow: hidden; }
.navtitle { display: flex; align-items: center; justify-content: space-between; flex: none; height: 28px; padding: 2px 16px 0 0; }
.navtitle h2 { font-size: 12px; }
.maxi { width: 12px; height: 11px; border: 1px solid #111; border-top-width: 2px; }
.sheet { flex: 1; min-height: 0; width: 908px; padding-top: 1px; border-top: 1px solid #dcdcdc; border-right: 1px solid #dcdcdc; overflow: hidden; }
table { width: 906px; table-layout: fixed; border-collapse: separate; border-spacing: 0; }
.c1 { width: 149px; }
.c2 { width: 100px; }
.c3 { width: 50px; }
.c4 { width: 156px; }
.c5 { width: 50px; }
.c6 { width: 98px; }
.c7 { width: 100px; }
.c8 { width: 143px; }
.c9 { width: 60px; }
th { height: 21px; padding: 2px 0 0 6px; text-align: left; font-weight: 400; line-height: 18px; background: #efefef; border-right: 1px solid #cfcfcf; border-bottom: 1px solid #cfcfcf; }
td { height: 20px; padding: 0 0 0 4px; line-height: 18px; white-space: nowrap; overflow: hidden; border-right: 1px solid #e8e8e8; border-bottom: 1px solid #e8e8e8; }
th:last-child, td:last-child { border-right: 0; }
td:first-child { padding-left: 0; border-right-color: #000; }
tbody tr:nth-child(even) { background: #fafafa; }
.fold { display: inline-block; vertical-align: middle; margin: 1px 2px 0 0; }
td:first-child.r0 { padding-left: 1px; }
td:first-child.r1 { padding-left: 3px; }
td.ok { background: linear-gradient(#1cb02c, #1cb02c) 0 5px / 1px 4px no-repeat; }
.active td { color: #7428c8; }
td.mark { padding-left: 9px; }
td.tick { padding-left: 6px; }

/* graphics window */
.viewport { flex: 1; min-width: 0; display: flex; flex-direction: column; }
.tabs { display: flex; flex: none; height: 23px; border-bottom: 2px solid #559fb8; }
.tab { display: flex; align-items: center; gap: 6px; padding: 0 6px 0 4px; background: #559fb8; color: #fff; font: 13px/20px "Open Sans", sans-serif; }
.tab span { margin-left: -4px; }
.scene { flex: 1; min-height: 0; position: relative; background: linear-gradient(#b4b4b5, #c7c8c9 33%, #dadbdd 62%, #e6e7e9 85%, #e8e9eb); overflow: hidden; }
.axis { font-size: 13px; }
.watermark {
  position: absolute;
  right: 5px;
  bottom: 4px;
  font: 300 16px/20px "Noto Sans CJK SC", sans-serif;
  font-feature-settings: "hwid";
  color: #55585c;
  text-shadow: 1px 1px #fff;
  white-space: nowrap;
}

/* operation dialog */
.dialog {
  position: absolute;
  left: 459px;
  top: -15px;
  width: 328px;
  padding-bottom: 10px;
  background: #efefef;
  border: 1px solid #d6d6d6;
  border-top: 0;
}
.titlebar { display: flex; align-items: center; height: 30px; margin: 0 -1px; padding: 8px 9px 0 6px; background: #559fb8; color: #fff; }
.titlebar h1 { flex: 1; font-size: 14px; margin-left: 7px; }
.panel { margin: 3px 5px 0; background: #fff; border-bottom: 1px solid #c4c4c4; }
.titlebar + .panel { margin-top: 4px; }
.panel h3 { display: flex; align-items: center; justify-content: space-between; height: 23px; padding: 2px 5px 0 7px; font-size: 14px; color: #00648c; }
.panel h3 svg { margin-bottom: 2px; }
.up { transform: scaleY(-1); }
.rows { display: flex; flex-direction: column; gap: 2px; padding: 7px 9px 8px; }
.row { display: flex; align-items: center; gap: 2px; }
.row > :first-child { margin-right: auto; }
.row.pair > span { padding-top: 6px; }
.top, .start { align-items: flex-start; }
.row.top > label { line-height: 25px; }
.start > label { line-height: 23px; }
.row button { display: flex; align-items: center; justify-content: center; width: 32px; height: 32px; border: 1px solid #a0a0a0; background: #fff; }
.row button svg { width: 24px; height: 24px; }
.row button:disabled { border-color: #cfcfcf; }
.row button:disabled svg { opacity: .5; filter: grayscale(.7); }
.row button.small { width: 24px; height: 24px; }
.row button.small svg { width: 18px; height: 18px; }
.w117 { width: 117px; }
.w141 { width: 141px; }
.w63 { width: 63px; }
.pic { height: 26px; }
.pic svg { position: absolute; left: 4px; top: 5px; }
.pic select { padding-left: 24px; }
.num {
  width: 82px;
  height: 23px;
  padding: 0 3px 2px 21px;
  border: 1px solid #a0a0a0;
  font: 300 18px/19px "Noto Sans CJK SC", sans-serif;
  font-feature-settings: "hwid";
}
.num.end { text-align: right; padding-right: 5px; }
.row.check { height: 21px; gap: 5px; }
.row.check > :first-child { margin-right: 0; }
.check input { appearance: none; width: 13px; height: 13px; border: 1px solid #333; background: #fff; }
.row.actions { justify-content: center; padding: 7px 0 8px; }
.row.actions > :first-child { margin-right: 0; }
.foot { display: flex; justify-content: flex-end; gap: 5px; padding: 11px 15px 0; }
.foot button { width: 54px; height: 25px; }
.okbtn { background: #72b3c9; color: #fff; }
.cancel { background: #dcdcdc; border: 1px solid #a0a0a0; }
```
